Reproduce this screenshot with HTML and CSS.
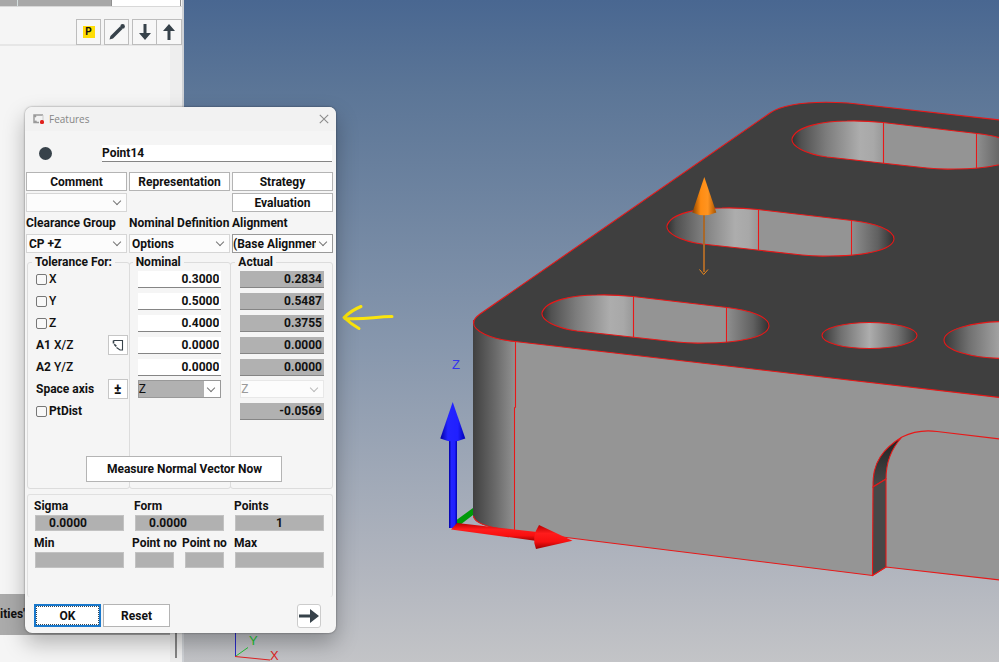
FILE: index.html
```html
<!DOCTYPE html>
<html lang="en">
<head>
<meta charset="utf-8">
<title>Features</title>
<link rel="stylesheet" href="styles.css">
</head>
<body>
<div class="app">
  <aside class="sidebar">
    <div class="tabs"><span class="tab tab-first"></span><span class="tab tab-second"></span><span class="tab tab-active"></span></div>
    <div class="toolbar">
      <button class="tool" type="button" aria-label="Properties"><span class="tool-p">P</span></button>
      <button class="tool" type="button" aria-label="Edit">
        <svg width="18" height="18" viewBox="0 0 18 18"><path d="M1.500 16.500L2.500 13L12 3.500L14.500 6L5 15.500z" fill="#37424a"/><circle cx="14.600" cy="3.400" r="2.300" fill="#37424a"/></svg>
      </button>
      <span class="tool-pair">
        <button class="tool" type="button" aria-label="Move down">
          <svg width="14" height="18" viewBox="0 0 14 18"><path d="M5.500 1h3v9H13l-6 7-6-7h4.500z" fill="#37424a"/></svg>
        </button>
        <button class="tool" type="button" aria-label="Move up">
          <svg width="14" height="18" viewBox="0 0 14 18"><path d="M5.500 17h3V8H13L7 1 1 8h4.500z" fill="#37424a"/></svg>
        </button>
      </span>
    </div>
    <div class="list">
      <div class="list-body"><div class="list-band">ities'</div></div>
      <div class="track"><span class="thumb"></span></div>
    </div>
  </aside>

  <main class="viewport">
    <svg class="scene" viewBox="184 0 815 662" preserveAspectRatio="xMinYMin slice" role="img" aria-label="Part model">
      <defs>
        <linearGradient id="corner" gradientUnits="userSpaceOnUse" x1="473" y1="0" x2="516" y2="0">
          <stop offset="0" stop-color="#404040"/><stop offset=".5" stop-color="#686868"/><stop offset="1" stop-color="#949494"/>
        </linearGradient>
        <linearGradient id="pocket">
          <stop offset="0" stop-color="#303030"/><stop offset=".04" stop-color="#505050"/><stop offset=".15" stop-color="#7c7c7c"/><stop offset=".3" stop-color="#adadad"/><stop offset=".36" stop-color="#a8a8a8"/><stop offset=".402" stop-color="#989898"/><stop offset=".404" stop-color="#949494"/><stop offset=".813" stop-color="#949494"/><stop offset=".82" stop-color="#8c8c8c"/><stop offset=".93" stop-color="#606060"/><stop offset="1" stop-color="#303030"/>
        </linearGradient>
        <linearGradient id="bore">
          <stop offset="0" stop-color="#383838"/><stop offset=".2" stop-color="#707070"/><stop offset=".5" stop-color="#adadad"/><stop offset=".8" stop-color="#707070"/><stop offset="1" stop-color="#383838"/>
        </linearGradient>
        <linearGradient id="arch" gradientUnits="userSpaceOnUse" x1="0" y1="436" x2="0" y2="486">
          <stop offset="0" stop-color="#202020"/><stop offset="1" stop-color="#474747"/>
        </linearGradient>
        <linearGradient id="cone">
          <stop offset="0" stop-color="#8a4300"/><stop offset=".35" stop-color="#ff8c12"/><stop offset=".65" stop-color="#ff9420"/><stop offset="1" stop-color="#a55200"/>
        </linearGradient>
        <linearGradient id="blue">
          <stop offset="0" stop-color="#0000a0"/><stop offset=".3" stop-color="#2424ff"/><stop offset=".7" stop-color="#2020ff"/><stop offset="1" stop-color="#0000b0"/>
        </linearGradient>
        <linearGradient id="red" x1="0" y1="0" x2="0" y2="1">
          <stop offset="0" stop-color="#b80000"/><stop offset=".35" stop-color="#ff1c1c"/><stop offset=".7" stop-color="#f81010"/><stop offset="1" stop-color="#9c0000"/>
        </linearGradient>
        <g id="slot">
          <path d="M542 313C545 300 575 295 597 295Q615 294.500 633 296.500L727 307.500C750 310 769 317 769 326C768 338 735 343 705 343Q690 343.500 677 342L577 331C555 328 541 320 542 313Z" fill="url(#pocket)"/>
          <path d="M633.500 297v40M726.500 308v34"/>
        </g>
      </defs>

      <path d="M473 320V515C473 524 490 528 515 531L872 575.500L886 567L1000 580V390L515 335Z" fill="#959595"/>
      <path d="M473 320V515C473 524 490 528 515 531V335Z" fill="url(#corner)"/>
      <g stroke="#e81818" stroke-width="1.100" fill="none">
        <path d="M473.500 516C474 523 490 528 514 531L872.500 575.500L886 567L1000 580"/>
        <path d="M474 323C473 320 476 317 480 314L770 113C785 103 815 101 848 103L1000 120V397.500L515 341.500C490 339 473 331 473.500 322Z" fill="#3f3f3f"/>
        <path d="M515.500 342V407L514.500 408V530"/>
        <path d="M873 487C872 462 884 448 902 437C890 450 886 464 886 479Z" fill="url(#arch)"/>
        <path d="M873 487L886 479V567L872.500 575.500Z" fill="#474747"/>
        <path d="M902 437Q918 429 937 431.500L1000 439"/>
        <use href="#slot"/>
        <use href="#slot" x="125" y="-87"/>
        <use href="#slot" x="250" y="-174"/>
        <ellipse cx="869.500" cy="335.500" rx="47.500" ry="13" fill="url(#bore)"/>
        <ellipse cx="1006" cy="340" rx="62" ry="18.500" fill="url(#bore)"/>
      </g>

      <path d="M704 215V272" stroke="#a8682a" stroke-width="2"/>
      <path d="M699.500 269.500L703.700 274.500L708 269.500" stroke="#f08a1c" fill="none"/>
      <path d="M704.300 177L692.300 212.500Q704 218 716.300 212.500Z" fill="url(#cone)"/>

      <path d="M451 524L473 508V515L456 528Z" fill="#009a08"/>
      <rect x="449" y="438" width="8" height="90" fill="url(#blue)"/>
      <path d="M452.700 402L440.300 438.500Q453 444 465.300 438.500Z" fill="url(#blue)"/>
      <path d="M451 529.500L457 523L537 532V541Z" fill="url(#red)"/>
      <path d="M539 525L572.500 540.700L536 549Q531 537 539 525Z" fill="url(#red)"/>
      <text class="axis axis-z" x="452" y="369">Z</text>

      <path d="M235.500 625V656" stroke="#2a2ac8"/>
      <path d="M236 656L248 647.500" stroke="#22c433"/>
      <path d="M235 656.500L270 660" stroke="#e02222"/>
      <text class="axis axis-y" x="249" y="645">Y</text>
      <text class="axis axis-x" x="270" y="660">X</text>

      <path d="M392 316.500C375 316.500 365 320 345 318.500M361 306.500Q352 310 344 317.500Q351 324 359 328.500" fill="none" stroke="#fbe50c" stroke-width="3" stroke-linecap="round" stroke-linejoin="round"/>
    </svg>
  </main>
</div>

<form class="dialog">
  <header class="titlebar">
    <svg width="13" height="12" viewBox="0 0 13 12"><path d="M11 2H2v7.500h5M2 2l2 2M2 9.500L4.500 8" fill="none" stroke="#9a9a9a" stroke-width="1.500"/><path d="M11 2v5" stroke="#ccc"/><rect x="8" y="7" width="4" height="4" rx="1.500" fill="#e0201c"/></svg>
    <h1>Features</h1>
    <button class="close" type="button" aria-label="Close"><svg width="10" height="10" viewBox="0 0 10 10"><path d="M.8.8l8.400 8.400M9.200.8L.8 9.200" stroke="#8c8c8c" stroke-width="1.100"/></svg></button>
  </header>

  <div class="name-row">
    <span class="dot"></span>
    <input class="name" type="text" value="Point14" aria-label="Feature name">
  </div>

  <div class="options">
    <button class="btn" type="button">Comment</button>
    <button class="btn" type="button">Representation</button>
    <button class="btn" type="button">Strategy</button>
    <span class="select"><select aria-label="Comment choice"><option></option></select></span>
    <span></span>
    <button class="btn" type="button">Evaluation</button>
    <label for="clearance">Clearance Group</label>
    <label for="definition">Nominal Definition</label>
    <label for="alignment">Alignment</label>
    <span class="select"><select id="clearance"><option>CP +Z</option></select></span>
    <span class="select"><select id="definition"><option>Options</option></select></span>
    <span class="select select-strong"><select id="alignment"><option>(Base Alignment)</option></select></span>
  </div>

  <div class="groups">
    <fieldset class="group tolerance">
      <legend>Tolerance For:</legend>
      <label class="line"><input type="checkbox"><span class="thin">X</span></label>
      <label class="line"><input type="checkbox"><span class="thin">Y</span></label>
      <label class="line"><input type="checkbox"><span class="thin">Z</span></label>
      <div class="line"><span>A1 <span class="thin">X/Z</span></span>
        <button class="mini" type="button" aria-label="Swap angle"><svg width="14" height="14" viewBox="0 0 14 14"><path d="M2.500 2.500H11.500V12H9L5.500 9.500" fill="none" stroke="#37424a" stroke-width="1.100"/><path d="M2.500 2.500V5.500L6 9" fill="none" stroke="#37424a" stroke-width="1.600" stroke-dasharray="3 1"/></svg></button></div>
      <div class="line"><span>A2 <span class="thin">Y/Z</span></span></div>
      <div class="line"><span>Space axis</span><button class="mini" type="button">±</button></div>
      <label class="line"><input type="checkbox"><span>PtDist</span></label>
    </fieldset>
    <fieldset class="group nominal">
      <legend>Nominal</legend>
      <div class="line"><input class="field" type="text" value="0.3000" aria-label="Nominal X"></div>
      <div class="line"><input class="field" type="text" value="0.5000" aria-label="Nominal Y"></div>
      <div class="line"><input class="field" type="text" value="0.4000" aria-label="Nominal Z"></div>
      <div class="line"><input class="field" type="text" value="0.0000" aria-label="Nominal A1"></div>
      <div class="line"><input class="field" type="text" value="0.0000" aria-label="Nominal A2"></div>
      <div class="line"><span class="select select-filled"><select aria-label="Nominal space axis"><option>Z</option></select></span></div>
    </fieldset>
    <fieldset class="group actual">
      <legend>Actual</legend>
      <div class="line"><input class="field shaded" type="text" value="0.2834" readonly aria-label="Actual X"></div>
      <div class="line"><input class="field shaded" type="text" value="0.5487" readonly aria-label="Actual Y"></div>
      <div class="line"><input class="field shaded" type="text" value="0.3755" readonly aria-label="Actual Z"></div>
      <div class="line"><input class="field shaded" type="text" value="0.0000" readonly aria-label="Actual A1"></div>
      <div class="line"><input class="field shaded" type="text" value="0.0000" readonly aria-label="Actual A2"></div>
      <div class="line"><span class="select select-off"><select disabled aria-label="Actual space axis"><option>Z</option></select></span></div>
      <div class="line"><input class="field shaded" type="text" value="-0.0569" readonly aria-label="Point distance"></div>
    </fieldset>
    <button class="btn measure" type="button">Measure Normal Vector Now</button>
  </div>

  <div class="stats">
    <div class="stat"><label for="sigma">Sigma</label><input id="sigma" class="result" type="text" value="0.0000" readonly></div>
    <div class="stat"><label for="form">Form</label><input id="form" class="result" type="text" value="0.0000" readonly></div>
    <div class="stat"><label for="points">Points</label><input id="points" class="result centered" type="text" value="1" readonly></div>
    <div class="stat"><label for="min">Min</label><input id="min" class="result" type="text" readonly></div>
    <div class="pair">
      <div class="stat"><label for="pmin">Point no</label><input id="pmin" class="result" type="text" readonly></div>
      <div class="stat"><label for="pmax">Point no</label><input id="pmax" class="result" type="text" readonly></div>
    </div>
    <div class="stat"><label for="max">Max</label><input id="max" class="result" type="text" readonly></div>
  </div>

  <footer class="actions">
    <button class="btn ok" type="button">OK</button>
    <button class="btn" type="button">Reset</button>
    <button class="next" type="button" aria-label="Next"><svg width="20" height="16" viewBox="0 0 20 16"><path d="M0 6.500h11V1l9 7-9 7V9.500H0z" fill="#37424a"/></svg></button>
  </footer>
</form>
</body>
</html>
```

FILE: styles.css
```css
* { box-sizing: border-box; }

body {
  margin: 0;
  font: bold 12px/14px Roboto, "Liberation Sans", sans-serif;
  color: #111;
}

button, input, select {
  margin: 0;
  padding: 0;
  font: inherit;
  color: inherit;
  border-radius: 0;
}

svg { display: block; }

.app {
  display: flex;
  height: 100vh;
  overflow: hidden;
}

/* Sidebar */
.sidebar {
  display: flex;
  flex-direction: column;
  flex: none;
  width: 184px;
  background: #f5f5f5;
  border-right: 2px solid #cfd2d6;
}

.tabs {
  display: flex;
  height: 7px;
  border-bottom: 1px solid #d8d8d8;
}

.tab { background: #a8a8a8; }
.tab-first { width: 18px; border-right: 1px solid #d3dede; }
.tab-second { width: 93px; }
.tab-active {
  width: 70px;
  background: #fff;
  border-left: 1px solid #909090;
  border-right: 1px solid #909090;
}

.toolbar {
  display: flex;
  justify-content: flex-end;
  gap: 3px;
  padding: 12px 0 0;
  height: 39px;
  border-bottom: 2px solid #e6e6e6;
}

.tool {
  display: flex;
  align-items: center;
  justify-content: center;
  width: 25px;
  height: 26px;
  background: #f7f7f7;
  border: 1px solid #bdbdbd;
}

.tool-pair { display: flex; }
.tool-pair .tool + .tool { border-left: 0; }

.tool-p {
  width: 12px;
  height: 12px;
  background: #ffdd05;
  font-size: 10px;
  line-height: 12px;
}

.list {
  display: flex;
  flex: 1;
}

.list-body {
  display: flex;
  flex: 1;
  align-items: flex-end;
  padding-bottom: 27px;
}

.list-band {
  flex: 1;
  height: 41px;
  background: #ababab;
  line-height: 40px;
}

.track {
  display: flex;
  align-items: flex-end;
  justify-content: center;
  width: 12px;
  padding-bottom: 4px;
  background: #eee;
}

.thumb {
  width: 2px;
  height: 60px;
  background: #858585;
}

/* Model view */
.viewport {
  flex: 1;
  min-width: 0;
  background: linear-gradient(#496791 0%, #5c7697 14%, #8797ad 52%, #b1b5be 86%, #c3c4c7 100%);
}

.scene {
  width: 100%;
  height: 100%;
}

.axis { font: 13px "Liberation Sans", sans-serif; }
.axis-z { fill: #3434ee; }
.axis-y { fill: #22c433; }
.axis-x { fill: #e02222; }

/* Floating feature window */
.dialog {
  position: absolute;
  left: 25px;
  top: 107px;
  width: 311px;
  padding-bottom: 5px;
  background: #f5f5f5;
  border-radius: 7px;
  box-shadow: 0 0 2px rgba(0, 0, 0, .5), 0 10px 22px rgba(0, 0, 0, .28);
}

.titlebar {
  display: flex;
  align-items: center;
  gap: 4px;
  height: 24px;
  padding: 0 7px;
  background: #f2f2f2;
  border-radius: 7px 7px 0 0;
}

.titlebar h1 {
  flex: 1;
  margin: 0;
  font: 10px/14px "Open Sans", sans-serif;
  color: #858585;
}

.close {
  border: 0;
  background: none;
}

.name-row {
  display: flex;
  align-items: center;
  gap: 50px;
  padding: 14px 4px 10px 14px;
}

.dot {
  flex: none;
  width: 13px;
  height: 13px;
  border-radius: 50%;
  background: #37424a;
}

.name {
  flex: 1;
  height: 17px;
  min-width: 0;
  border: 0;
  border-bottom: 1px solid #858585;
  background: #fff;
}

.btn {
  background: #fff;
  border: 1px solid #b4b4b4;
}

.options {
  display: grid;
  grid-template-columns: repeat(3, minmax(0, 1fr));
  grid-template-rows: 19px 19px 18px 19px;
  gap: 2px;
  padding: 0 3px 0 1px;
}

.options label {
  line-height: 18px;
  white-space: nowrap;
}

.select {
  display: flex;
  position: relative;
  min-width: 0;
  background: #fcfcfc;
  border: 1px solid #d6d6d6;
}

.select::after {
  content: "";
  position: absolute;
  right: 6px;
  top: 4px;
  width: 5px;
  height: 5px;
  border: solid #777;
  border-width: 0 1px 1px 0;
  transform: rotate(45deg);
}

.select select {
  flex: 1;
  min-width: 0;
  padding: 0 16px 0 2px;
  border: 0;
  appearance: none;
  background: none;
}

.select-strong { border-color: #999; }
.select-strong select { padding-left: 0; }

/* Tolerance, nominal and actual columns */
.groups {
  display: grid;
  grid-template-columns: repeat(3, minmax(0, 1fr));
  padding: 3px 4px 0 2px;
}

.group {
  grid-row: 1;
  min-width: 0;
  margin: 0 -1px 0 0;
  padding: 0 0 66px;
  border: 1px solid #dcdcdc;
  border-radius: 3px;
}

.group legend {
  padding: 0 3px;
  line-height: 12px;
}

.tolerance { grid-column: 1; padding-left: 8px; padding-right: 1px; }
.tolerance legend { margin-left: -4px; }
.nominal { grid-column: 2; padding-left: 8px; padding-right: 9px; }
.nominal legend { margin-left: -5px; }
.actual { grid-column: 3; padding-left: 9px; padding-right: 8px; }
.actual legend { margin-left: -5px; }

.line {
  display: flex;
  align-items: center;
  height: 22px;
}

.line input[type="checkbox"] {
  appearance: none;
  width: 11px;
  height: 11px;
  margin-right: 2px;
  border: 1px solid #777;
  border-radius: 2px;
  background: #f8f8f8;
}

.thin { font-weight: 500; }

.mini {
  display: flex;
  align-items: center;
  justify-content: center;
  width: 20px;
  height: 20px;
  margin-left: auto;
  background: #fff;
  border: 1px solid #c6c6c6;
  font-size: 14px;
}

.field {
  width: 100%;
  min-width: 0;
  height: 17px;
  padding-right: 2px;
  border: 0;
  border-bottom: 1px solid #858585;
  background: #fff;
  text-align: right;
}

.shaded { background: #b1b1b1; }

.line .select {
  flex: 1;
  height: 18px;
  font-weight: normal;
}

.line .select select { padding-left: 0; }

.select-filled {
  background: linear-gradient(to left, #fff 16px, #b1b1b1 16px);
  border-color: #999;
}

.select-off {
  border-color: #e8e8e8;
  color: #9a9a9a;
}

.select-off select { opacity: 1; }
.select-off::after { border-color: #bbb; }

.measure {
  grid-row: 1;
  grid-column: 1 / -1;
  place-self: end center;
  width: 196px;
  height: 26px;
  margin: 0 0 7px 10px;
}

/* Results */
.stats {
  display: grid;
  grid-template-columns: repeat(3, minmax(0, 1fr));
  gap: 5px 11px;
  margin: 5px 3px 0 2px;
  padding: 4px 8px 29px 7px;
  border: 1px solid #e0e0e0;
  border-bottom: 0;
  border-radius: 3px;
}

.stat {
  display: flex;
  flex-direction: column;
  min-width: 0;
  gap: 2px;
}

.stat label {
  margin-left: -1px;
  white-space: nowrap;
}

.result {
  width: 100%;
  height: 16px;
  padding-left: 13px;
  border: 1px solid #c2c2c2;
  background: #b1b1b1;
}

.centered {
  padding-left: 0;
  text-align: center;
}

.pair {
  display: grid;
  grid-template-columns: repeat(2, minmax(0, 1fr));
  gap: 11px;
}

.pair label { margin-left: -3px; }

.actions {
  display: flex;
  gap: 2px;
  padding: 7px 15px 0 9px;
}

.actions .btn {
  width: 67px;
  height: 23px;
}

.actions .ok {
  border: 2px solid #1878cc;
  outline: 1px dotted #3a4650;
  outline-offset: -3px;
}

.next {
  display: flex;
  align-items: center;
  justify-content: center;
  width: 24px;
  height: 24px;
  margin-left: auto;
  border: 1px solid #ccc;
  border-radius: 3px;
  background: #fff;
}
```
